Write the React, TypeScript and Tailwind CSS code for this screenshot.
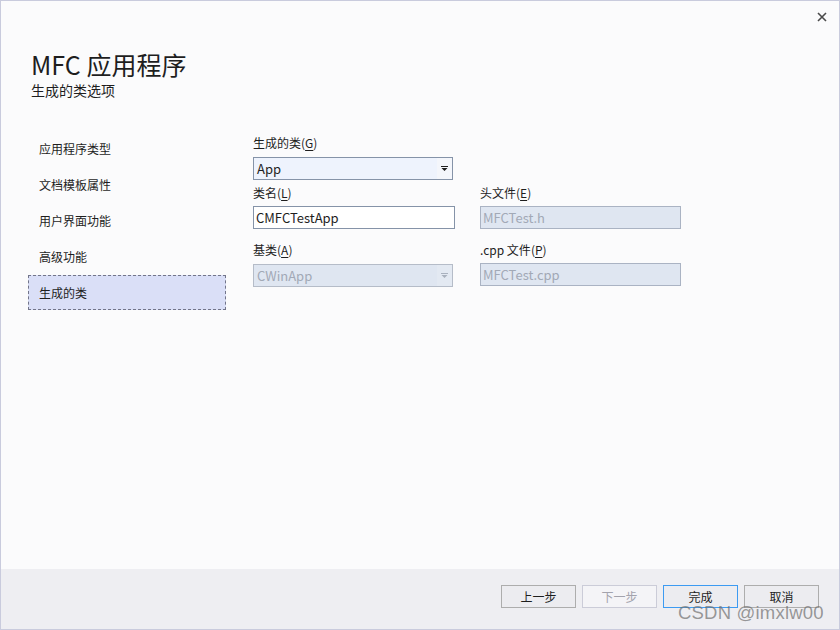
import React from 'react'

const FONT = "font-['Noto_Sans_CJK_SC','Noto_Sans',sans-serif]"

const NAV = ['应用程序类型', '文档模板属性', '用户界面功能', '高级功能', '生成的类']

function Arrow({ muted = false }: { muted?: boolean }) {
  return (
    <svg width="7" height="5" viewBox="0 0 7 5">
      <path d="M0 0h7v1H0z M0.5 2h6L3.5 5z" fill={muted ? '#a9b1be' : '#1e1e1e'} />
    </svg>
  )
}

function Label({ text, mnemonic, className = '' }: { text: string; mnemonic: string; className?: string }) {
  return (
    <div className={`h-[18px] text-[12px] leading-[18px] text-[#1e1e1e] ${className}`}>
      {text}(<span className="underline underline-offset-2">{mnemonic}</span>)
    </div>
  )
}

function Button({ label, disabled = false, primary = false }: { label: string; disabled?: boolean; primary?: boolean }) {
  const tone = disabled
    ? 'border-[#cbccd8] bg-[#f4f4f7] text-[#a3a3ad]'
    : primary
      ? 'border-[#3d9bf2] bg-[#ececf0] text-[#1e1e1e]'
      : 'border-[#adadad] bg-[#ececf0] text-[#1e1e1e]'
  return (
    <div className={`flex h-[23px] w-[75px] items-center justify-center border text-[12px] ${tone}`}>{label}</div>
  )
}

export default function App() {
  return (
    <div className={`relative flex h-[630px] w-[840px] flex-col border border-[#c9cbdd] bg-[#fbfbfc] ${FONT}`}>
      {/* close */}
      <svg className="absolute right-[12px] top-[11px]" width="10" height="10" viewBox="0 0 10 10">
        <path d="M1 1l8 8M9 1L1 9" stroke="#4a4a4a" strokeWidth="1.6" />
      </svg>

      <div className="flex-1">
        <div className="pl-[30px] pt-[48px]">
          <h1 className="text-[25px] leading-[30px] text-[#1e1e1e]">MFC 应用程序</h1>
          <p className="mt-[2px] text-[14px] leading-[18px] text-[#1e1e1e]">生成的类选项</p>
        </div>

        <div className="mt-[32px] flex">
          <nav className="ml-[27px] w-[198px]">
            {NAV.map((item, i) =>
              i === NAV.length - 1 ? (
                <div
                  key={item}
                  className="flex h-[35px] items-center border border-dashed border-[#72758a] bg-[#dadff7] pl-[10px] text-[12px] text-[#1e1e1e]"
                >
                  {item}
                </div>
              ) : (
                <div key={item} className="flex h-[36px] items-center pl-[11px] text-[12px] text-[#1e1e1e]">
                  {item}
                </div>
              )
            )}
          </nav>

          <div className="ml-[27px]">
            <Label text="生成的类" mnemonic="G" className="mt-[3px]" />
            <div className="mt-[5px] flex h-[23px] w-[200px] border border-[#8593a8] bg-[#eef3fd]">
              <span className="flex-1 pl-[3px] text-[13px] leading-[21px] text-[#1e1e1e]">App</span>
              <span className="flex w-[15px] items-center justify-center bg-[#f4f6fb]">
                <Arrow />
              </span>
            </div>

            <div className="grid grid-cols-[202px_201px] gap-x-[25px]">
              <div>
                <Label text="类名" mnemonic="L" className="mt-[4px]" />
                <div className="mt-[4px] h-[23px] w-[202px] border border-[#8593a8] bg-white pl-[2px] text-[13px] leading-[21px] text-[#1e1e1e]">
                  CMFCTestApp
                </div>
              </div>
              <div>
                <Label text="头文件" mnemonic="E" className="mt-[4px]" />
                <div className="mt-[4px] h-[23px] w-[201px] border border-[#aab3c3] bg-[#dfe6f1] pl-[2px] text-[13px] leading-[21px] text-[#a2a9b6]">
                  MFCTest.h
                </div>
              </div>
              <div>
                <Label text="基类" mnemonic="A" className="mt-[12px]" />
                <div className="mt-[5px] flex h-[23px] w-[200px] border border-[#b5bcc8] bg-[#dfe6f1]">
                  <span className="flex-1 pl-[3px] text-[13px] leading-[21px] text-[#a2a9b6]">CWinApp</span>
                  <span className="flex w-[15px] items-center justify-center bg-[#e3e9f2]">
                    <Arrow muted />
                  </span>
                </div>
              </div>
              <div>
                <Label text=".cpp 文件" mnemonic="P" className="mt-[12px]" />
                <div className="mt-[4px] h-[23px] w-[201px] border border-[#aab3c3] bg-[#dfe6f1] pl-[2px] text-[13px] leading-[21px] text-[#a2a9b6]">
                  MFCTest.cpp
                </div>
              </div>
            </div>
          </div>
        </div>
      </div>

      <footer className="flex h-[60px] justify-end gap-[6px] bg-[#eeeef2] pr-[20px] pt-[16px]">
        <Button label="上一步" />
        <Button label="下一步" disabled />
        <Button label="完成" primary />
        <Button label="取消" />
      </footer>

      <span className="pointer-events-none absolute left-[677px] top-[598px] font-['Liberation_Sans',sans-serif] text-[18.5px] tracking-[0.2px] text-[#6e6e6e]/70">
        CSDN @imxlw00
      </span>
    </div>
  )
}
